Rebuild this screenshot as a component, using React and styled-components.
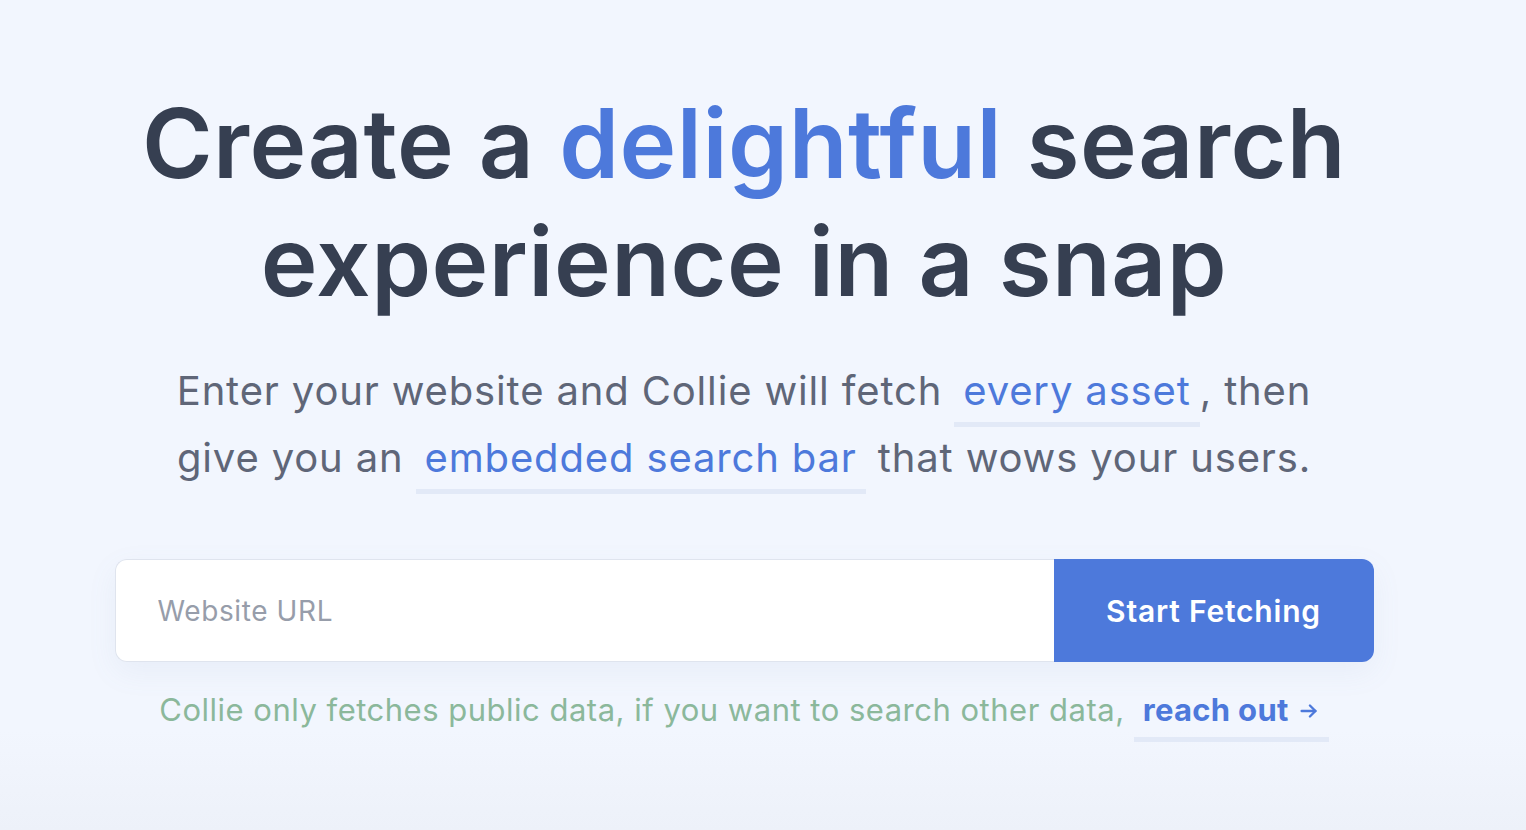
import React from 'react';
import styled, { createGlobalStyle } from 'styled-components';

const GlobalStyle = createGlobalStyle`
  html, body {
    margin: 0;
    padding: 0;
    height: 100%;
  }
  body {
    font-family: Inter, "Noto Sans", sans-serif;
    background: #f2f6fe;
  }
`;

const Page = styled.main`
  height: 830px;
  box-sizing: border-box;
  padding: 84px 38px 0 0;
  display: flex;
  flex-direction: column;
  align-items: center;
  background: linear-gradient(to bottom, #f2f6fe 0%, #f2f6fe 88%, #edf1f9 100%);
`;

const Title = styled.h1`
  margin: 0;
  font-family: Inter, sans-serif;
  font-size: 96px;
  font-weight: 600;
  line-height: 118px;
  letter-spacing: 0.5px;
  color: #363f51;
  text-align: center;
`;

const Accent = styled.span`
  color: #4d79db;
`;

const Lead = styled.p`
  margin: 37px 0 0;
  font-family: Inter, sans-serif;
  font-size: 40px;
  font-weight: 400;
  line-height: 67px;
  letter-spacing: 0.85px;
  color: #5f6678;
  text-align: center;
`;

const Mark = styled.span`
  color: #4d79db;
  padding: 0 9px ${(p) => (p.$bold ? '9px' : '7px')};
  border-bottom: 5px solid #e2e9f7;
  font-weight: ${(p) => (p.$bold ? 700 : 'inherit')};
  letter-spacing: ${(p) => (p.$bold ? '0.3px' : 'inherit')};
`;

const Form = styled.form`
  margin-top: 68px;
  width: 1259px;
  height: 103px;
  display: flex;
  border-radius: 12px;
  box-shadow: 0 10px 30px rgba(120, 140, 180, 0.08);
`;

const UrlInput = styled.input`
  flex: 1;
  box-sizing: border-box;
  border: 1px solid #dfe4ee;
  border-right: none;
  border-radius: 12px 0 0 12px;
  background: #fff;
  padding: 0 42px;
  font-family: Inter, sans-serif;
  font-size: 28px;
  letter-spacing: 0.6px;
  color: #363f51;
  outline: none;

  &::placeholder {
    color: #979daa;
  }
`;

const Submit = styled.button`
  width: 320px;
  border: none;
  border-radius: 0 12px 12px 0;
  background: #4d79db;
  color: #fff;
  font-family: Inter, sans-serif;
  font-size: 30px;
  font-weight: 600;
  letter-spacing: 0.8px;
  cursor: pointer;
`;

const Note = styled.p`
  margin: 28px 0 0;
  font-family: Inter, sans-serif;
  font-size: 31px;
  line-height: 40px;
  letter-spacing: 0.5px;
  color: #8bb89b;
  text-align: center;
`;

const Arrow = styled.svg`
  width: 22px;
  height: 22px;
  margin-left: 9px;
  vertical-align: -1px;
`;

export default function App() {
  return (
    <>
      <GlobalStyle />
      <Page>
        <Title>
          Create a <Accent>delightful</Accent> search
          <br />
          experience in a snap
        </Title>
        <Lead>
          Enter your website and Collie will fetch <Mark>every asset</Mark>, then
          <br />
          give you an <Mark>embedded search bar</Mark> that wows your users.
        </Lead>
        <Form onSubmit={(e) => e.preventDefault()}>
          <UrlInput type="text" placeholder="Website URL" />
          <Submit type="submit">Start Fetching</Submit>
        </Form>
        <Note>
          Collie only fetches public data, if you want to search other data,{' '}
          <Mark $bold>
            reach out
            <Arrow viewBox="0 0 24 24" fill="none" stroke="currentColor" strokeWidth="2.6" strokeLinecap="round" strokeLinejoin="round">
              <path d="M4 12h15" />
              <path d="M13 6l6 6-6 6" />
            </Arrow>
          </Mark>
        </Note>
      </Page>
    </>
  );
}
